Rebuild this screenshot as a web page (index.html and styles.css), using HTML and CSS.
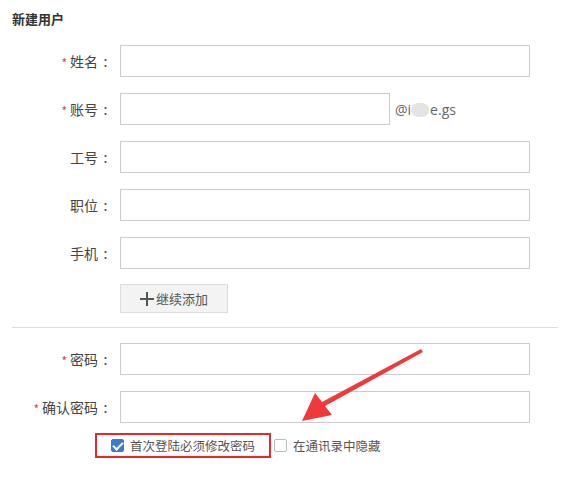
FILE: index.html
```html
<!DOCTYPE html>
<html lang="zh-CN">
<head>
    <meta charset="UTF-8">
    <title>新建用户</title>
    <link rel="stylesheet" href="styles.css">
</head>
<body>
    <div class="page">
        <h3 class="title">新建用户</h3>

        <div class="row">
            <label class="label"><span class="req">*</span>姓名<span class="colon">:</span></label>
            <input class="field" type="text">
        </div>
        <div class="row">
            <label class="label"><span class="req">*</span>账号<span class="colon">:</span></label>
            <input class="field short" type="text">
            <span class="domain">@i<span class="mask"></span>e.gs</span>
        </div>
        <div class="row">
            <label class="label">工号<span class="colon">:</span></label>
            <input class="field" type="text">
        </div>
        <div class="row">
            <label class="label">职位<span class="colon">:</span></label>
            <input class="field" type="text">
        </div>
        <div class="row">
            <label class="label">手机<span class="colon">:</span></label>
            <input class="field" type="text">
        </div>
        <div class="row">
            <span class="label"></span>
            <button class="add-btn">
                <svg class="plus" width="14" height="14" viewBox="0 0 14 14">
                    <path d="M7 0V14M0 7H14" stroke="#555" stroke-width="2"/>
                </svg>继续添加
            </button>
        </div>

        <hr class="divider">

        <div class="row">
            <label class="label"><span class="req">*</span>密码<span class="colon">:</span></label>
            <input class="field" type="password">
        </div>
        <div class="row">
            <label class="label"><span class="req">*</span>确认密码<span class="colon">:</span></label>
            <input class="field" type="password">
        </div>

        <div class="checks">
            <label class="check mark-box"><span class="box on"></span>首次登陆必须修改密码</label>
            <label class="check"><span class="box"></span>在通讯录中隐藏</label>
        </div>

        <!-- annotation arrow -->
        <svg class="arrow" width="130" height="80" viewBox="0 0 130 80">
            <polygon points="128,4 30,58 37,67 7,73 20,45 27,54 126,1" fill="#f0393b"/>
        </svg>
    </div>
</body>
</html>
```

FILE: styles.css
```css
* {
    box-sizing: border-box;
}
body {
    margin: 0;
    background: #fff;
    font-family: "Microsoft YaHei", "Noto Sans CJK SC", sans-serif;
    font-size: 13px;
    color: #444;
}
.page {
    position: relative;
    width: 570px;
    height: 478px;
}
.title {
    margin: 0 0 16px 12px;
    padding-top: 9px;
    font-size: 13px;
    line-height: 20px;
    font-weight: bold;
    color: #333;
}
.row {
    display: flex;
    align-items: center;
    margin-bottom: 16px;
}
.label {
    width: 112px;
    text-align: right;
    margin-right: 8px;
    flex-shrink: 0;
    font-size: 14px;
}
.colon {
    display: inline-block;
    width: 13px;
    text-align: center;
    margin-left: 1px;
}
.req {
    color: #e5363a;
    font-size: 12px;
    margin-right: 3px;
    position: relative;
    top: 1px;
}
.field {
    width: 410px;
    height: 32px;
    border: 1px solid #ccc;
    outline: none;
    padding: 0 8px;
}
.field.short {
    width: 270px;
}
.domain {
    margin-left: 5px;
    color: #666;
    font-family: "Segoe UI", "Open Sans", sans-serif;
    font-size: 14px;
}
.mask {
    display: inline-block;
    width: 18px;
    height: 14px;
    margin: 0 1px -2px 0;
    background: #e4e4e4;
    border-radius: 7px;
}
.add-btn {
    display: flex;
    align-items: center;
    justify-content: center;
    width: 108px;
    height: 29px;
    margin-top: -1px;
    border: 1px solid #ddd;
    background: #f3f3f3;
    color: #555;
    font-family: inherit;
    font-size: 13px;
    padding: 0;
}
.plus {
    margin-right: 2px;
}
.divider {
    border: none;
    border-top: 1px solid #ddd;
    margin: -2px 12px 15px 12px;
}
.checks {
    display: flex;
    align-items: center;
    padding-left: 95px;
    margin-top: -6px;
}
.check {
    display: flex;
    align-items: center;
    color: #555;
    font-size: 12.5px;
}
.mark-box {
    border: 2px solid #e9282c;
    height: 25px;
    padding: 0 14px;
    margin-right: 3px;
}
.box {
    width: 13px;
    height: 13px;
    border: 1px solid #bbb;
    border-radius: 2px;
    margin-right: 6px;
    background: #fff;
    position: relative;
}
.box.on {
    background: #3a7bd5;
    border-color: #3a7bd5;
}
.box.on::after {
    content: "";
    position: absolute;
    left: 3px;
    top: 0px;
    width: 4px;
    height: 8px;
    border: solid #fff;
    border-width: 0 2px 2px 0;
    transform: rotate(45deg);
}
.arrow {
    position: absolute;
    left: 295px;
    top: 348px;
}
```
